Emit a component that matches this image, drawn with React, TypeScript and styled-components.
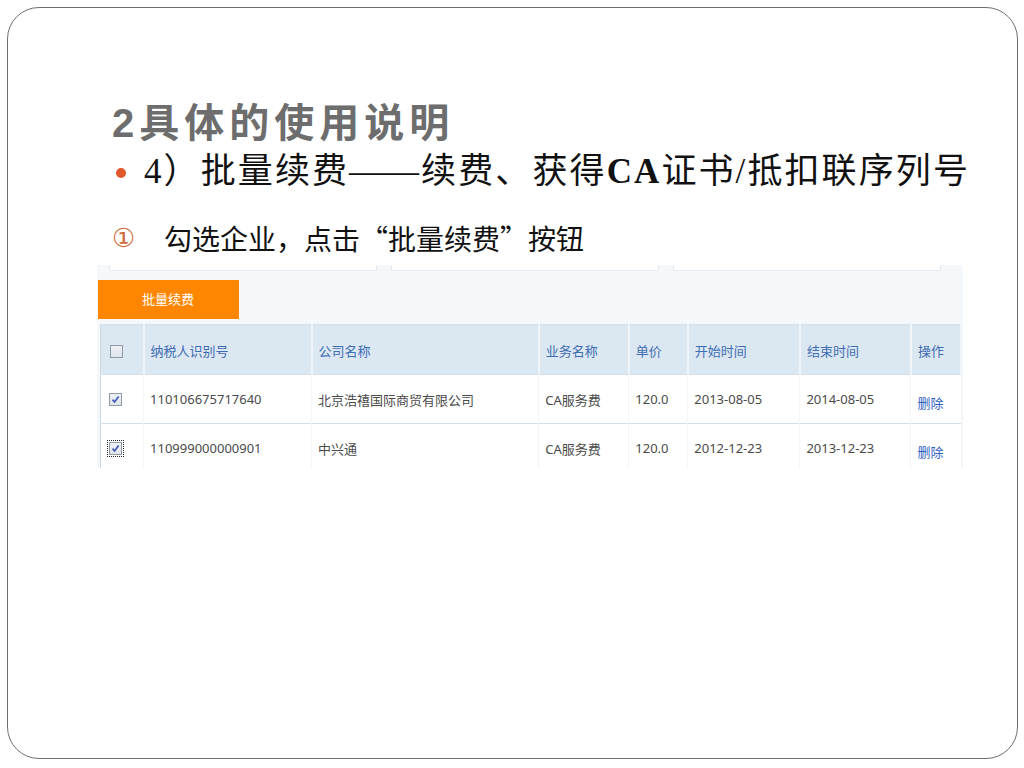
import React from 'react';
import styled, { createGlobalStyle } from 'styled-components';

const GlobalStyle = createGlobalStyle`
  html, body {
    margin: 0;
    padding: 0;
    background: #ffffff;
  }
  body {
    font-family: "Noto Sans CJK SC", "Noto Sans", sans-serif;
  }
`;

interface Row {
  taxId: string;
  company: string;
  service: string;
  price: string;
  start: string;
  end: string;
  focused?: boolean;
}

const rows: Row[] = [
  {
    taxId: '110106675717640',
    company: '北京浩禧国际商贸有限公司',
    service: 'CA服务费',
    price: '120.0',
    start: '2013-08-05',
    end: '2014-08-05',
  },
  {
    taxId: '110999000000901',
    company: '中兴通',
    service: 'CA服务费',
    price: '120.0',
    start: '2012-12-23',
    end: '2013-12-23',
    focused: true,
  },
];

const columns = ['', '纳税人识别号', '公司名称', '业务名称', '单价', '开始时间', '结束时间', '操作'];
const widths = [43, 168, 227, 90, 59, 112, 111, 50];

export default function App() {
  return (
    <>
      <GlobalStyle />
      <Slide>
        <Title>2具体的使用说明</Title>
        <Bullet>
          <Dot />
          <BulletText>
            4）批量续费<Dash>——</Dash>续费、获得<Bold>CA</Bold>证书/抵扣联序列号
          </BulletText>
        </Bullet>
        <Step>
          <StepMark>①</StepMark>
          <StepText>勾选企业，点击“批量续费”按钮</StepText>
        </Step>

        <Shot>
          <FilterStrip>
            <FilterBox />
            <FilterBox />
            <FilterBox />
          </FilterStrip>
          <Toolbar>
            <RenewButton>批量续费</RenewButton>
          </Toolbar>
          <Table>
            <colgroup>
              {widths.map((w, i) => (
                <col key={i} style={{ width: w }} />
              ))}
            </colgroup>
            <thead>
              <tr>
                {columns.map((c, i) => (
                  <Th key={i}>{i === 0 ? <Check /> : c}</Th>
                ))}
              </tr>
            </thead>
            <tbody>
              {rows.map((r) => (
                <tr key={r.taxId}>
                  <Td>
                    <CheckWrap focused={r.focused}>
                      <Check checked />
                    </CheckWrap>
                  </Td>
                  <Td>{r.taxId}</Td>
                  <Td>{r.company}</Td>
                  <Td>{r.service}</Td>
                  <Td>{r.price}</Td>
                  <Td>{r.start}</Td>
                  <Td>{r.end}</Td>
                  <Td>
                    <Link>删除</Link>
                  </Td>
                </tr>
              ))}
            </tbody>
          </Table>
        </Shot>
      </Slide>
    </>
  );
}

const Check = ({ checked }: { checked?: boolean }) => (
  <Box>
    {checked && (
      <svg width="9" height="9" viewBox="0 0 9 9">
        <path d="M1.5 4.6 L3.6 7 L7.6 1.6" fill="none" stroke="#3a55b8" strokeWidth="1.6" />
      </svg>
    )}
  </Box>
);

const Slide = styled.div`
  box-sizing: border-box;
  margin: 7px 0 0 7px;
  width: 1011px;
  height: 752px;
  border: 1px solid #6e6e6e;
  border-radius: 32px;
  padding-top: 91px;
  overflow: hidden;
`;

const Title = styled.div`
  margin-left: 104px;
  font-family: "Liberation Sans", "Noto Sans CJK SC", sans-serif;
  font-size: 40px;
  line-height: 48px;
  letter-spacing: 5px;
  color: #6d6d6d;
  font-weight: 700;
`;

const Bullet = styled.div`
  display: flex;
  align-items: center;
  margin-left: 108px;
  height: 50px;
`;

const Dot = styled.span`
  width: 10px;
  height: 10px;
  border-radius: 50%;
  background: #e0582a;
  margin-right: 18px;
  margin-top: 2px;
`;

const BulletText = styled.span`
  font-family: "Liberation Serif", "Noto Sans CJK SC", serif;
  font-size: 35px;
  line-height: 50px;
  letter-spacing: 2.1px;
  color: #111;
  white-space: nowrap;
`;

const Dash = styled.span`
  letter-spacing: 0;
  margin-right: 2px;
`;

const Bold = styled.b`
  font-weight: 700;
`;

const Step = styled.div`
  display: flex;
  align-items: center;
  margin-left: 104px;
  margin-top: 21px;
  height: 40px;
`;

const StepMark = styled.span`
  width: 52px;
  font-size: 26px;
  color: #cf6b3c;
  font-family: "DejaVu Sans", sans-serif;
`;

const StepText = styled.span`
  font-size: 28px;
  line-height: 40px;
  color: #111;
  white-space: nowrap;
`;

const Shot = styled.div`
  margin: 7px 0 0 89px;
  width: 866px;
  height: 203px;
  overflow: hidden;
  background: #f4f8fb;
  font-family: "Noto Sans", "Noto Sans CJK SC", sans-serif;
  font-size: 13px;
`;

const FilterStrip = styled.div`
  display: flex;
  gap: 14px;
  padding: 0 22px 0 12px;
  height: 15px;
`;

const FilterBox = styled.div`
  flex: 1;
  height: 5px;
  border: 1px solid #e6ebf0;
  border-top: none;
  background: #ffffff;
`;

const Toolbar = styled.div`
  display: flex;
  height: 44px;
  padding-left: 1px;
`;

const RenewButton = styled.div`
  width: 141px;
  height: 39px;
  background: #ff8600;
  color: #fff;
  box-sizing: border-box;
  padding-left: 44px;
  line-height: 37px;
  font-family: "Noto Sans CJK SC", sans-serif;
`;

const Table = styled.table`
  margin-left: 3px;
  border-collapse: collapse;
  table-layout: fixed;
  width: 862px;
  border: 1px solid #c9d9e6;
  border-top: 2px solid #d6e2ec;
  background: #fff;
`;

const Th = styled.th`
  height: 48px;
  background: #dbe7f1;
  color: #3f6db3;
  font-weight: 400;
  text-align: left;
  padding: 0 0 0 6px;
  border-right: 2px solid #f0f5f9;
  font-family: "Noto Sans CJK SC", sans-serif;
  &:first-child {
    padding-left: 9px;
  }
`;

const Td = styled.td`
  height: 48px;
  color: #4a4a4a;
  padding: 0 0 0 6px;
  border-top: 1px solid #d3e1ec;
  border-right: 1px solid #f2f5f8;
  white-space: nowrap;
  &:first-child {
    padding-left: 9px;
  }
`;

const Box = styled.span`
  box-sizing: border-box;
  display: inline-flex;
  align-items: center;
  justify-content: center;
  width: 13px;
  height: 13px;
  border: 1px solid #8e9aa6;
  background: linear-gradient(#eef1f4, #dfe4ea);
  vertical-align: middle;
`;

const CheckWrap = styled.span<{ focused?: boolean }>`
  display: inline-flex;
  padding: 1px;
  margin-left: -2px;
  outline: ${(p) => (p.focused ? '1px dotted #222' : 'none')};
`;

const Link = styled.span`
  color: #2f5fbf;
  position: relative;
  top: 3px;
  font-family: "Noto Sans CJK SC", sans-serif;
`;
